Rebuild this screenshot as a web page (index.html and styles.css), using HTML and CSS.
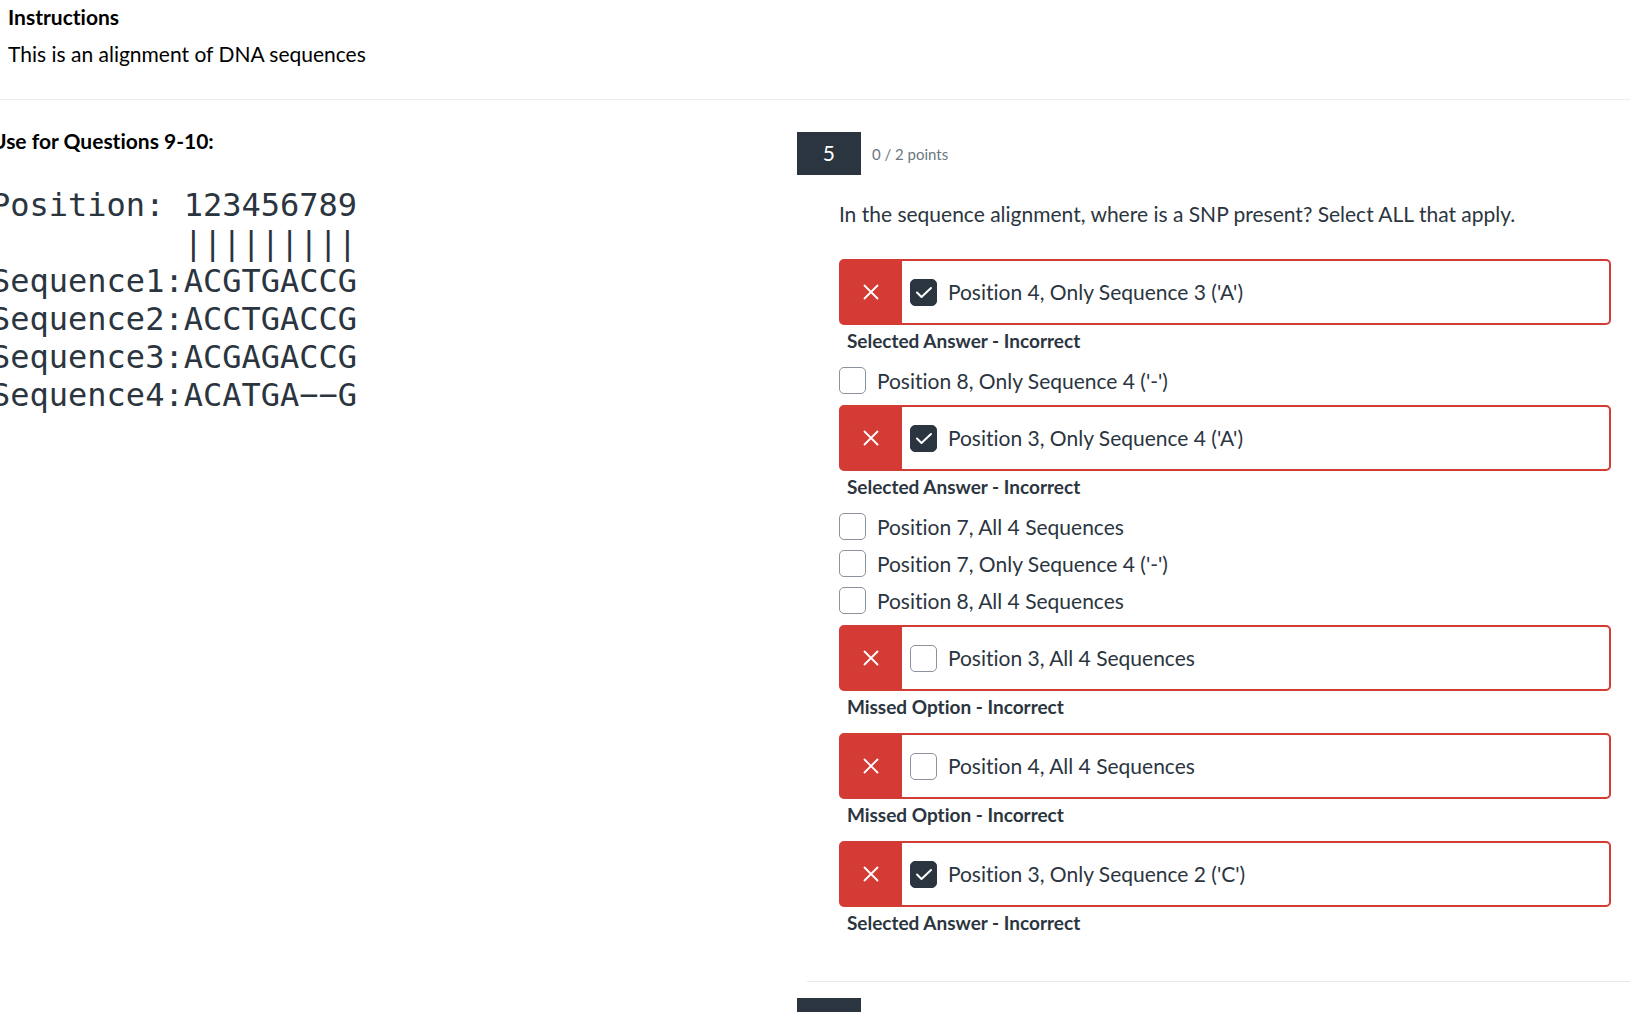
FILE: index.html
```html
<!DOCTYPE html>
<html lang="en">
<head>
    <meta charset="UTF-8">
    <meta name="viewport" content="width=device-width, initial-scale=1.0">
    <title>Quiz Results</title>
    <link rel="stylesheet" href="styles.css">
</head>
<body>

<!-- Shared icons -->
<svg class="sprite" aria-hidden="true">
    <symbol id="icon-x" viewBox="0 0 16 16">
        <path d="M1.5 1.5 L14.5 14.5 M14.5 1.5 L1.5 14.5" fill="none" stroke="currentColor" stroke-width="1.8" stroke-linecap="round"/>
    </symbol>
    <symbol id="icon-check" viewBox="0 0 27 27">
        <path d="M7 13.5 L11.5 18 L21 9" fill="none" stroke="currentColor" stroke-width="2" stroke-linecap="round" stroke-linejoin="round"/>
    </symbol>
</svg>

<header class="instructions">
    <h1>Instructions</h1>
    <p>This is an alignment of DNA sequences</p>
</header>

<main class="quiz">
    <section class="stimulus">
        <h2>Use for Questions 9-10:</h2>
<pre class="alignment">
Position: 123456789
          |||||||||
Sequence1:ACGTGACCG
Sequence2:ACCTGACCG
Sequence3:ACGAGACCG
Sequence4:ACATGA−−G</pre>
    </section>

    <div class="questions">
        <section class="question">
            <div class="question-header">
                <span class="number">5</span>
                <span class="points">0 / 2 points</span>
            </div>
            <div class="question-body">
                <p class="prompt" id="prompt-5">In the sequence alignment, where is a SNP present? Select ALL that apply.</p>
                <ul class="answers" aria-labelledby="prompt-5">
                    <li class="incorrect">
                        <div class="answer-box">
                            <span class="mark"><svg><use href="#icon-x"/></svg></span>
                            <label class="option">
                                <span class="check"><input type="checkbox" checked><svg><use href="#icon-check"/></svg></span>
                                Position 4, Only Sequence 3 ('A')
                            </label>
                        </div>
                        <p class="result">Selected Answer - Incorrect</p>
                    </li>
                    <li class="plain">
                        <label class="option">
                            <span class="check"><input type="checkbox"></span>
                            Position 8, Only Sequence 4 ('-')
                        </label>
                    </li>
                    <li class="incorrect">
                        <div class="answer-box">
                            <span class="mark"><svg><use href="#icon-x"/></svg></span>
                            <label class="option">
                                <span class="check"><input type="checkbox" checked><svg><use href="#icon-check"/></svg></span>
                                Position 3, Only Sequence 4 ('A')
                            </label>
                        </div>
                        <p class="result">Selected Answer - Incorrect</p>
                    </li>
                    <li class="plain">
                        <label class="option">
                            <span class="check"><input type="checkbox"></span>
                            Position 7, All 4 Sequences
                        </label>
                    </li>
                    <li class="plain">
                        <label class="option">
                            <span class="check"><input type="checkbox"></span>
                            Position 7, Only Sequence 4 ('-')
                        </label>
                    </li>
                    <li class="plain">
                        <label class="option">
                            <span class="check"><input type="checkbox"></span>
                            Position 8, All 4 Sequences
                        </label>
                    </li>
                    <li class="incorrect">
                        <div class="answer-box">
                            <span class="mark"><svg><use href="#icon-x"/></svg></span>
                            <label class="option">
                                <span class="check"><input type="checkbox"></span>
                                Position 3, All 4 Sequences
                            </label>
                        </div>
                        <p class="result">Missed Option - Incorrect</p>
                    </li>
                    <li class="incorrect">
                        <div class="answer-box">
                            <span class="mark"><svg><use href="#icon-x"/></svg></span>
                            <label class="option">
                                <span class="check"><input type="checkbox"></span>
                                Position 4, All 4 Sequences
                            </label>
                        </div>
                        <p class="result">Missed Option - Incorrect</p>
                    </li>
                    <li class="incorrect">
                        <div class="answer-box">
                            <span class="mark"><svg><use href="#icon-x"/></svg></span>
                            <label class="option">
                                <span class="check"><input type="checkbox" checked><svg><use href="#icon-check"/></svg></span>
                                Position 3, Only Sequence 2 ('C')
                            </label>
                        </div>
                        <p class="result">Selected Answer - Incorrect</p>
                    </li>
                </ul>
            </div>
        </section>

        <hr class="separator">

        <section class="question">
            <div class="question-header">
                <span class="number">6</span>
            </div>
        </section>
    </div>
</main>

</body>
</html>
```
FILE: styles.css
```css
* {
    box-sizing: border-box;
}
body {
    margin: 0;
    height: 100vh;
    overflow: hidden;
    background-color: #fff;
    color: #2b3540;
    font-family: Lato, "Liberation Sans", sans-serif;
    font-size: 21px;
    line-height: 34px;
    font-variant-ligatures: none;
}
h1, h2, p, ul, pre {
    margin: 0;
}
h1, h2 {
    font-size: 21px;
    font-weight: 700;
    color: #000;
}
.sprite {
    display: none;
}

/* Instructions */
.instructions {
    padding: 0 8px 28px;
    border-bottom: 1px solid #eee;
    color: #000;
}
.instructions p {
    margin-top: 3px;
}

/* Two columns */
.quiz {
    display: grid;
    grid-template-columns: 22fr 23fr;
}
.stimulus {
    margin-left: -9px;
    padding-top: 24px;
}
.alignment {
    margin-top: 28px;
    font-family: "DejaVu Sans Mono", monospace;
    font-size: 32px;
    line-height: 38px;
}
.questions {
    padding-top: 32px;
}

/* Question */
.question-header {
    display: flex;
    align-items: center;
    gap: 11px;
}
.number {
    width: 64px;
    height: 43px;
    line-height: 42px;
    background-color: #2b3540;
    color: #fff;
    text-align: center;
}
.points {
    font-size: 15px;
    color: #6b7780;
}
.question-body {
    padding: 22px 19px 0 42px;
}
.answers {
    margin-top: 28px;
    padding: 0;
    list-style: none;
}
.incorrect {
    height: 108px;
}
.plain {
    height: 37px;
}
.plain + .incorrect {
    margin-top: 1px;
}
.answer-box {
    display: flex;
    height: 66px;
    border: 2px solid #d43b35;
    border-radius: 5px;
}
.mark {
    display: flex;
    align-items: center;
    justify-content: center;
    width: 61px;
    margin-right: 8px;
    background-color: #d43b35;
    color: #fff;
}
.mark svg {
    width: 16px;
    height: 16px;
}
.option {
    display: flex;
    align-items: center;
    gap: 11px;
}
.plain .option {
    height: 27px;
}
.result {
    padding-left: 8px;
    font-size: 19px;
    line-height: 32px;
    font-weight: 700;
}

/* Checkbox */
.check {
    display: grid;
    width: 27px;
    height: 27px;
}
.check input,
.check svg {
    grid-area: 1 / 1;
    width: 27px;
    height: 27px;
    margin: 0;
}
.check input {
    appearance: none;
    border: 1px solid #8b929c;
    border-radius: 5px;
    background-color: #fff;
}
.check input:checked {
    border-color: #2b3540;
    background-color: #2b3540;
}
.check svg {
    color: #fff;
    pointer-events: none;
}

.separator {
    margin: 32px 0 16px 10px;
    border: 0;
    border-top: 1px solid #e5e7e9;
}
```
